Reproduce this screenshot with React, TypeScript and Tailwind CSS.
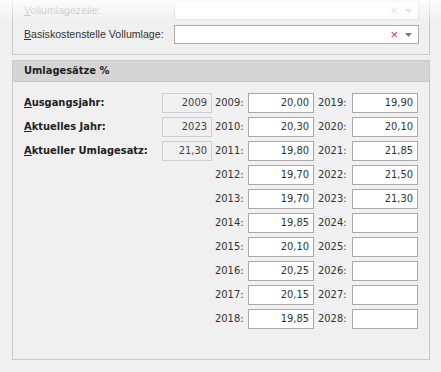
import React from "react";

const rows: { y1: string; v1: string; y2: string; v2: string }[] = [
	{ y1: "2009", v1: "20,00", y2: "2019", v2: "19,90" },
	{ y1: "2010", v1: "20,30", y2: "2020", v2: "20,10" },
	{ y1: "2011", v1: "19,80", y2: "2021", v2: "21,85" },
	{ y1: "2012", v1: "19,70", y2: "2022", v2: "21,50" },
	{ y1: "2013", v1: "19,70", y2: "2023", v2: "21,30" },
	{ y1: "2014", v1: "19,85", y2: "2024", v2: "" },
	{ y1: "2015", v1: "20,10", y2: "2025", v2: "" },
	{ y1: "2016", v1: "20,25", y2: "2026", v2: "" },
	{ y1: "2017", v1: "20,15", y2: "2027", v2: "" },
	{ y1: "2018", v1: "19,85", y2: "2028", v2: "" },
];

const info: { first: string; rest: string; value: string }[] = [
	{ first: "A", rest: "usgangsjahr:", value: "2009" },
	{ first: "A", rest: "ktuelles Jahr:", value: "2023" },
	{ first: "A", rest: "ktueller Umlagesatz:", value: "21,30" },
];

const Combo = ({ disabled }: { disabled?: boolean }) => (
	<div
		className={`w-[245px] h-[19px] bg-white border flex items-center justify-end pr-[6px] gap-[7px] ${
			disabled ? "border-[#dcdcdc]" : "border-[#acacac]"
		}`}>
		<span className={`text-[13px] leading-none ${disabled ? "text-[#efbcbc]" : "text-[#d23a3a]"}`}>×</span>
		<svg width="7" height="4" viewBox="0 0 7 4">
			<path d="M0 0h7L3.5 4z" fill={disabled ? "#d0d0d0" : "#7a7a7a"} />
		</svg>
	</div>
);

export default function App() {
	return (
		<div className="relative w-[441px] h-[372px] overflow-hidden bg-[#f0f0f0] text-[#333] [font-family:'DejaVu_Sans_Condensed','DejaVu_Sans',sans-serif] text-[11px]">
			{/* top panel */}
			<div className="ml-[12px] w-[418px] h-[55px] border-l border-r border-b border-[#c8c8c8] pl-[11px] pt-[1px] flex flex-col gap-[5px] [font-family:'Liberation_Sans',Arial,sans-serif] text-[10.6px]">
				<div className="flex items-center h-[19px]">
					<span className="w-[150px] whitespace-nowrap text-[#b4b4b4]">
						<span className="underline">V</span>ollumlagezeile:
					</span>
					<Combo disabled />
				</div>
				<div className="flex items-center h-[19px]">
					<span className="w-[150px] whitespace-nowrap text-[#333]">
						<span className="underline">B</span>asiskostenstelle Vollumlage:
					</span>
					<Combo />
				</div>
			</div>
			<div className="absolute left-0 top-0 w-[441px] h-[22px] bg-gradient-to-b from-white/80 to-white/0 pointer-events-none" />

			{/* Umlagesätze */}
			<div className="ml-[12px] mt-[5px] w-[418px] h-[300px] border border-[#c8c8c8]">
				<div className="h-[21px] bg-[#d5d5d5] border-b border-[#c8c8c8] pl-[11px] flex items-center font-bold text-[#222]">
					Umlagesätze %
				</div>
				<div className="pt-[11px] pl-[11px] flex">
					<div className="w-[191px] flex flex-col gap-[4px]">
						{info.map(r => (
							<div key={r.rest} className="flex items-center h-[20px]">
								<span className="w-[138px] font-bold text-[#222]">
									<span className="underline">{r.first}</span>
									{r.rest}
								</span>
								<span className="w-[50px] h-[20px] border border-[#cdcdcd] bg-[#f0f0f0] text-right pr-[4px] leading-[18px] text-[#444]">
									{r.value}
								</span>
							</div>
						))}
					</div>
					<div className="flex flex-col gap-[4px]">
						{rows.map(r => (
							<div key={r.y1} className="flex items-center h-[20px]">
								<span className="w-[33px]">{r.y1}:</span>
								<span className="w-[66px] h-[20px] border border-[#a8a8a8] bg-white text-right pr-[4px] leading-[18px]">
									{r.v1}
								</span>
								<span className="w-[38px] pl-[4px]">{r.y2}:</span>
								<span className="w-[66px] h-[20px] border border-[#a8a8a8] bg-white text-right pr-[4px] leading-[18px]">
									{r.v2}
								</span>
							</div>
						))}
					</div>
				</div>
			</div>
		</div>
	);
}
